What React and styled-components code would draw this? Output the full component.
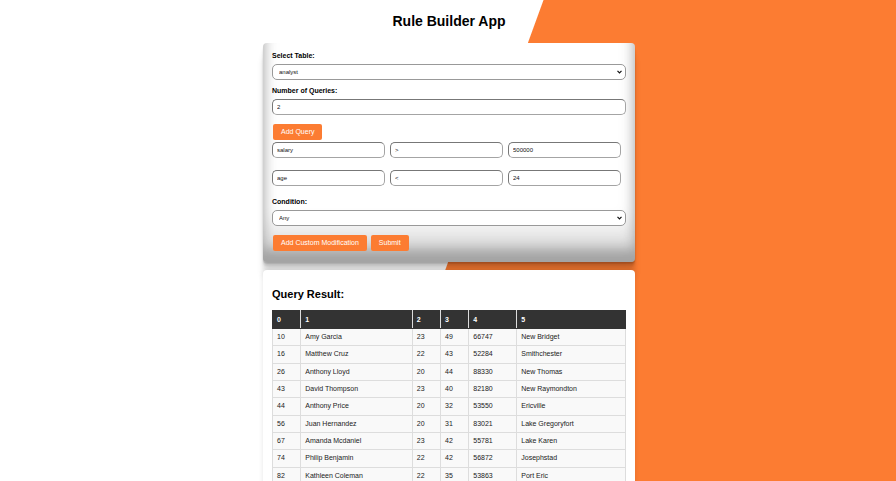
import React from "react";
import styled, { createGlobalStyle } from "styled-components";

const ORANGE = "#fc7c32";

const GlobalStyle = createGlobalStyle`
  *, *::before, *::after { box-sizing: border-box; }
  html { scrollbar-width: none; }
  body {
    margin: 0;
    color: #000;
    font-family: "Liberation Sans", Arial, sans-serif;
    font-size: 7px;
    background: linear-gradient(110deg, #fff calc(50% + 7px), ${ORANGE} calc(50% + 8px)) fixed;
  }
`;

const Page = styled.main`
  width: 100%;
  max-width: 374px;
  margin: 0 auto;
  padding-left: 2px;
`;

const Title = styled.h1`
  margin: 0;
  padding: 13px 0 14px;
  font-size: 14px;
  line-height: 16px;
  text-align: center;
`;

const FormCard = styled.form`
  display: flex;
  flex-direction: column;
  padding: 8px 9px 11px;
  border-radius: 4px;
  background: #fff;
  box-shadow:
    rgba(0, 0, 0, 0.17) 0 -11px 12px 0 inset,
    rgba(0, 0, 0, 0.15) 0 -17px 14px 0 inset,
    rgba(0, 0, 0, 0.1) 0 -37px 19px 0 inset,
    rgba(0, 0, 0, 0.06) 0 1px 1px,
    rgba(0, 0, 0, 0.09) 0 2px 1px,
    rgba(0, 0, 0, 0.09) 0 4px 2px,
    rgba(0, 0, 0, 0.09) 0 7px 4px,
    rgba(0, 0, 0, 0.09) 0 15px 7px;
`;

const Field = styled.div`
  display: flex;
  flex-direction: column;
  gap: 3px;
  margin-bottom: ${({ $space }) => $space}px;
`;

const Label = styled.label`
  font-size: 7px;
  font-weight: bold;
  line-height: 10px;
`;

const TextInput = styled.input`
  width: 100%;
  min-width: 0;
  height: 16px;
  padding: 0 4px;
  border: 1px solid;
  border-color: #777 #a4a4a4 #a4a4a4 #777;
  border-radius: 5px;
  background: #fff;
  color: #111;
  font-family: inherit;
  font-size: 6px;
`;

const SelectWrap = styled.div`
  position: relative;
  display: flex;
`;

const Select = styled.select`
  appearance: none;
  width: 100%;
  height: 16px;
  padding: 0 14px 0 6px;
  border: 1px solid #999;
  border-radius: 5px;
  background: #fff;
  color: #111;
  font-family: inherit;
  font-size: 6px;
`;

const Chevron = styled.svg`
  position: absolute;
  top: 6px;
  right: 4px;
  width: 5px;
  height: 4px;
  pointer-events: none;
`;

const Actions = styled.div`
  display: flex;
  gap: 4px;
  padding: 0 1px;
`;

const Button = styled.button`
  height: 16px;
  padding: 0 8px;
  border: 0;
  border-radius: 2px;
  background: ${ORANGE};
  color: #fff;
  font-family: inherit;
  font-size: 7px;
  line-height: 16px;
`;

const QueryList = styled.div`
  display: grid;
  gap: 12px;
  margin: 2px 0 11px;
  padding-right: 5px;
`;

const QueryRow = styled.div`
  display: grid;
  grid-template-columns: repeat(3, 1fr);
  gap: 5px;
`;

const ResultCard = styled.section`
  margin-top: 8px;
  padding: 17px 9px 9px;
  border-radius: 4px;
  background: #fff;
  box-shadow: 0 0 5px rgba(0, 0, 0, 0.1);
`;

const ResultTitle = styled.h2`
  margin: 0 0 9px;
  font-size: 11px;
  line-height: 14px;
`;

const Table = styled.table`
  width: 100%;
  height: 175px;
  border-collapse: collapse;
  table-layout: fixed;
`;

const Column = styled.col`
  width: ${({ $width }) => $width};
`;

const HeadCell = styled.th`
  height: 18px;
  padding: 0 4px;
  border: 1px solid #ddd;
  border-top-color: #333;
  border-bottom-color: #333;
  background: #333;
  color: #fff;
  font-size: 7px;
  line-height: 10px;
  text-align: left;

  &:first-child { border-left-color: #333; }
  &:last-child { border-right-color: #333; }
`;

const Cell = styled.td`
  height: 17px;
  padding: 0 4px;
  border: 1px solid #ddd;
  background: #f9f9f9;
  color: #222;
  font-size: 7px;
  line-height: 10px;
`;

const columnWidths = ["8%", "31.6%", "8%", "8%", "13.6%", "30.8%"];

const queries = [
  ["salary", ">", "500000"],
  ["age", "<", "24"],
];

const results = [
  [10, "Amy Garcia", 23, 49, 66747, "New Bridget"],
  [16, "Matthew Cruz", 22, 43, 52284, "Smithchester"],
  [26, "Anthony Lloyd", 20, 44, 88330, "New Thomas"],
  [43, "David Thompson", 23, 40, 82180, "New Raymondton"],
  [44, "Anthony Price", 20, 32, 53550, "Ericville"],
  [56, "Juan Hernandez", 20, 31, 83021, "Lake Gregoryfort"],
  [67, "Amanda Mcdaniel", 23, 42, 55781, "Lake Karen"],
  [74, "Philip Benjamin", 22, 42, 56872, "Josephstad"],
  [82, "Kathleen Coleman", 22, 35, 53863, "Port Eric"],
];

function SelectField({ id, label, options, space }) {
  return (
    <Field $space={space}>
      <Label htmlFor={id}>{label}</Label>
      <SelectWrap>
        <Select id={id}>
          {options.map((option) => (
            <option key={option}>{option}</option>
          ))}
        </Select>
        <Chevron viewBox="0 0 5 4" aria-hidden="true">
          <path d="M0.5 0.8 L2.5 2.8 L4.5 0.8" fill="none" stroke="#111" strokeWidth="1.2" />
        </Chevron>
      </SelectWrap>
    </Field>
  );
}

export default function App() {
  return (
    <>
      <GlobalStyle />
      <Page>
        <Title>Rule Builder App</Title>
        <FormCard onSubmit={(event) => event.preventDefault()}>
          <SelectField id="table" label="Select Table:" options={["analyst"]} space={6} />
          <Field $space={9}>
            <Label htmlFor="count">Number of Queries:</Label>
            <TextInput id="count" defaultValue="2" />
          </Field>
          <Actions>
            <Button type="button">Add Query</Button>
          </Actions>
          <QueryList>
            {queries.map(([field, operator, value]) => (
              <QueryRow key={field}>
                <TextInput aria-label="Field" defaultValue={field} />
                <TextInput aria-label="Operator" defaultValue={operator} />
                <TextInput aria-label="Value" defaultValue={value} />
              </QueryRow>
            ))}
          </QueryList>
          <SelectField id="condition" label="Condition:" options={["Any", "All"]} space={9} />
          <Actions>
            <Button type="button">Add Custom Modification</Button>
            <Button type="submit">Submit</Button>
          </Actions>
        </FormCard>
        <ResultCard>
          <ResultTitle>Query Result:</ResultTitle>
          <Table>
            <colgroup>
              {columnWidths.map((width, index) => (
                <Column key={index} $width={width} />
              ))}
            </colgroup>
            <thead>
              <tr>
                {columnWidths.map((_, index) => (
                  <HeadCell key={index} scope="col">{index}</HeadCell>
                ))}
              </tr>
            </thead>
            <tbody>
              {results.map((row) => (
                <tr key={row[0]}>
                  {row.map((value, index) => (
                    <Cell key={index}>{value}</Cell>
                  ))}
                </tr>
              ))}
            </tbody>
          </Table>
        </ResultCard>
      </Page>
    </>
  );
}
